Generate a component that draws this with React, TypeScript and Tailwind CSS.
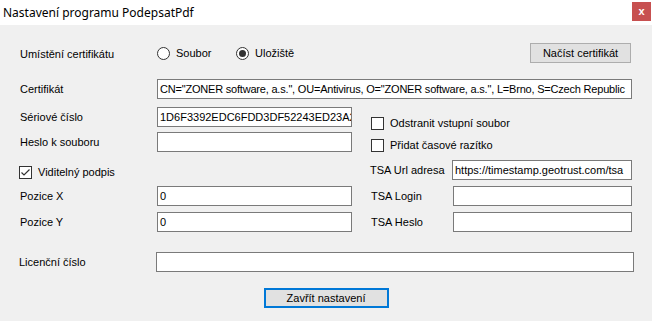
import React from "react";

function Box({ value = "", className = "" }: { value?: string; className?: string }) {
  return (
    <div
      className={
        "h-[20px] border border-[#7a7a7a] bg-white pl-[2px] flex items-center overflow-hidden whitespace-nowrap " +
        className
      }
    >
      {value}
    </div>
  );
}

function Radio({ checked, label }: { checked?: boolean; label: string }) {
  return (
    <div className="flex items-center gap-[6px] h-[13px]">
      <div className="w-[13px] h-[13px] rounded-full border border-[#333] bg-white flex items-center justify-center">
        {checked && <div className="w-[7px] h-[7px] rounded-full bg-[#333]" />}
      </div>
      <span>{label}</span>
    </div>
  );
}

function Check({ checked, label }: { checked?: boolean; label: string }) {
  return (
    <div className="flex items-center gap-[6px] h-[13px]">
      <div className="w-[13px] h-[13px] border border-[#333] bg-white flex items-center justify-center">
        {checked && (
          <svg width="11" height="11" viewBox="0 0 11 11">
            <polyline points="1.5,5.5 4,8 9.5,2.5" fill="none" stroke="#333" strokeWidth="1.2" />
          </svg>
        )}
      </div>
      <span>{label}</span>
    </div>
  );
}

export default function App() {
  return (
    <div className="w-[652px] h-[321px] bg-[#f0f0f0] font-['Liberation_Sans',Arial,sans-serif] text-[11px] text-black overflow-hidden">
      <div className="h-[25px] bg-white flex items-start justify-between">
        <span className="ml-[3px] mt-[4px] text-[12px] font-['Noto_Sans',sans-serif] text-black">
          Nastavení programu PodepsatPdf
        </span>
        <div className="w-[19px] h-[19px] mt-[2px] mr-[1px] bg-[#c75050] text-white font-bold text-[11px] flex items-center justify-center leading-none">
          x
        </div>
      </div>

      <div className="pl-[20px] pr-[20px]">
        {/* Row A */}
        <div className="mt-[18px] h-[20px] flex items-center">
          <span className="w-[137px] pt-[2px]">Umístění certifikátu</span>
          <div className="w-[79px]">
            <Radio label="Soubor" />
          </div>
          <Radio checked label="Uložiště" />
          <button className="ml-auto mr-[1px] w-[101px] h-[20px] bg-[#e1e1e1] border border-[#adadad] text-[11px] flex items-center justify-center">
            Načíst certifikát
          </button>
        </div>

        {/* Row B */}
        <div className="mt-[16px] flex items-center">
          <span className="w-[137px]">Certifikát</span>
          <Box
            className="flex-1 tracking-[-0.2px]"
            value={'CN="ZONER software, a.s.", OU=Antivirus, O="ZONER software, a.s.", L=Brno, S=Czech Republic'}
          />
        </div>

        {/* Rows C/D */}
        <div className="mt-[8px] flex">
          <div className="w-[332px] flex flex-col gap-[5px]">
            <div className="flex items-center">
              <span className="w-[137px]">Sériové číslo</span>
              <Box className="w-[195px]" value="1D6F3392EDC6FDD3DF52243ED23A2" />
            </div>
            <div className="flex items-center">
              <span className="w-[137px]">Heslo k souboru</span>
              <Box className="w-[195px]" />
            </div>
          </div>
          <div className="ml-[19px] pt-[10px] flex flex-col gap-[9px]">
            <Check label="Odstranit vstupní soubor" />
            <Check label="Přidat časové razítko" />
          </div>
        </div>

        {/* Row E */}
        <div className="mt-[8px] flex">
          <div className="w-[351px] -ml-[1px] pt-[6px]">
            <Check checked label="Viditelný podpis" />
          </div>
          <div className="flex-1 flex items-center">
            <span className="w-[82px]">TSA Url adresa</span>
            <Box className="flex-1" value="https://timestamp.geotrust.com/tsa" />
          </div>
        </div>

        {/* Row F */}
        <div className="mt-[6px] flex">
          <div className="w-[351px] flex items-center">
            <span className="w-[137px]">Pozice X</span>
            <Box className="w-[195px]" value="0" />
          </div>
          <div className="flex-1 flex items-center">
            <span className="w-[82px]">TSA Login</span>
            <Box className="flex-1" />
          </div>
        </div>

        {/* Row G */}
        <div className="mt-[6px] flex">
          <div className="w-[351px] flex items-center">
            <span className="w-[137px]">Pozice Y</span>
            <Box className="w-[195px]" value="0" />
          </div>
          <div className="flex-1 flex items-center">
            <span className="w-[82px]">TSA Heslo</span>
            <Box className="flex-1" />
          </div>
        </div>

        {/* Row H */}
        <div className="mt-[20px] flex items-center">
          <span className="w-[137px] -ml-[1px]">Licenční číslo</span>
          <Box className="flex-1 mr-[-2px]" />
        </div>

        {/* Row I */}
        <div className="mt-[16px] flex justify-center">
          <button className="w-[125px] h-[20px] bg-[#e1e1e1] border-2 border-[#0078d7] text-[11px] flex items-center justify-center">
            Zavřít nastavení
          </button>
        </div>
      </div>
    </div>
  );
}
